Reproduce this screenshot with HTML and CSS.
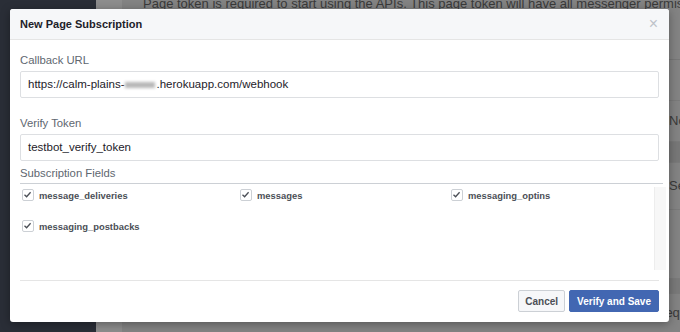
FILE: index.html
```html
<!DOCTYPE html>
<html lang="en">
<head>
  <meta charset="UTF-8">
  <title>New Page Subscription</title>
  <link rel="stylesheet" href="styles.css">
</head>
<body>

<div class="page">
  <div class="nav"></div>
  <div class="rail"></div>
  <div class="content">
    <p class="intro">Page token is required to start using the APIs. This page token will have all messenger permissions even if your app is not approved yet and can be used to test the APIs.</p>
    <div class="row r1"></div>
    <div class="row r2">Not</div>
    <div class="row r3"></div>
    <div class="row r4">Select</div>
    <div class="row r5"></div>
    <div class="row r6"></div>
    <div class="row r7">Request</div>
  </div>
</div>

<div class="modal">
  <div class="modal-head">
    <h2>New Page Subscription</h2>
    <span class="close">&times;</span>
  </div>

  <div class="modal-body">
    <label class="field-label">Callback URL</label>
    <div class="input">https://calm-plains-<span class="blur"></span>.herokuapp.com/webhook</div>

    <label class="field-label second">Verify Token</label>
    <div class="input">testbot_verify_token</div>

    <label class="field-label third">Subscription Fields</label>
    <div class="fields">
      <div class="field-grid">
        <div class="check"><span class="box"><svg viewBox="0 0 11 11" width="11" height="11"><path d="M2.5 5.8 L4.6 7.8 L8.6 3.2" fill="none" stroke="#4b4f56" stroke-width="1.3"/></svg></span>message_deliveries</div>
        <div class="check"><span class="box"><svg viewBox="0 0 11 11" width="11" height="11"><path d="M2.5 5.8 L4.6 7.8 L8.6 3.2" fill="none" stroke="#4b4f56" stroke-width="1.3"/></svg></span>messages</div>
        <div class="check"><span class="box"><svg viewBox="0 0 11 11" width="11" height="11"><path d="M2.5 5.8 L4.6 7.8 L8.6 3.2" fill="none" stroke="#4b4f56" stroke-width="1.3"/></svg></span>messaging_optins</div>
        <div class="check"><span class="box"><svg viewBox="0 0 11 11" width="11" height="11"><path d="M2.5 5.8 L4.6 7.8 L8.6 3.2" fill="none" stroke="#4b4f56" stroke-width="1.3"/></svg></span>messaging_postbacks</div>
      </div>
      <div class="track"></div>
    </div>
  </div>

  <div class="modal-foot">
    <button class="btn">Cancel</button>
    <button class="btn primary">Verify and Save</button>
  </div>
</div>

</body>
</html>
```

FILE: styles.css
```css
html, body {
  margin: 0;
  height: 100%;
  font-family: 'Liberation Sans', Arial, sans-serif;
  overflow: hidden;
}
.page {
  display: flex;
  height: 332px;
}
.nav {
  flex: 0 0 96px;
  background: #2a2e37;
}
.rail {
  flex: 0 0 26px;
  background: #8d8d8d;
}
.content {
  flex: 1;
  min-width: 0;
  background: #838383;
  color: #3a3a3a;
  font-size: 13px;
  overflow: hidden;
}
.intro {
  margin: -5px 0 0;
  padding: 0 0 0 21px;
  width: 600px;
  line-height: 17px;
  height: 64px;
  border-bottom: 1px solid #777;
}
.row {
  padding-left: 547px;
  height: 30px;
  line-height: 30px;
  white-space: nowrap;
  border-bottom: 1px solid #7a7a7a;
}
.r1 { height: 40px; }
.r2 { height: 40px; line-height: 40px; }
.r3 { height: 20px; background: #777; }
.r4 { height: 46px; line-height: 46px; }
.r5 { height: 68px; }
.r6 { height: 14px; background: #797979; }
.r7 { height: 38px; line-height: 38px; padding-left: 534px; }

.modal {
  position: absolute;
  left: 10px;
  top: 9px;
  width: 659px;
  height: 313px;
  background: #fff;
  border-radius: 3px;
  box-shadow: 0 2px 10px rgba(0, 0, 0, 0.35);
  overflow: hidden;
}
.modal-head {
  height: 30px;
  background: #f6f7f9;
  border-bottom: 1px solid #e5e5e5;
  display: flex;
  align-items: center;
  justify-content: space-between;
  padding: 0 10px;
}
.modal-head h2 {
  margin: 0;
  font-size: 11px;
  font-weight: bold;
  color: #1d2129;
}
.close {
  color: #bec2c9;
  font-size: 16px;
  line-height: 16px;
  margin-right: 1px;
}
.modal-body {
  padding: 10px 0 0 10px;
}
.field-label {
  display: block;
  font-size: 11.3px;
  line-height: 16px;
  color: #606770;
  margin-top: 2px;
  margin-bottom: 3px;
}
.field-label.second {
  margin-top: 17px;
  margin-bottom: 3px;
}
.field-label.third {
  margin-top: 4px;
  margin-bottom: 2px;
}
.input {
  width: 623px;
  height: 25px;
  line-height: 25px;
  border: 1px solid #dddfe2;
  border-radius: 2px;
  padding: 0 7px;
  font-size: 11.5px;
  color: #1d2129;
}
.blur {
  display: inline-block;
  width: 30px;
  height: 6px;
  background: #b8b8b8;
  vertical-align: middle;
  filter: blur(1.5px);
  margin-right: 2px;
}
.fields {
  position: relative;
  width: 643px;
  height: 86px;
  border-top: 1px solid #ccd0d5;
}
.field-grid {
  display: grid;
  grid-template-columns: 218px 211px 1fr;
  grid-auto-rows: 31px;
  padding: 5px 0 0 2px;
}
.check {
  display: flex;
  align-items: center;
  height: 12px;
  font-size: 9.4px;
  font-weight: bold;
  color: #4b4f56;
}
.box {
  display: inline-flex;
  width: 10px;
  height: 10px;
  border: 1px solid #ccd0d5;
  border-radius: 2px;
  margin-right: 5px;
  background: #fff;
  overflow: hidden;
}
.box svg {
  margin: -1px 0 0 -1px;
}
.track {
  position: absolute;
  right: -3px;
  top: 3px;
  bottom: 0;
  width: 11px;
  background: #f7f7f7;
  border-left: 1px solid #ededed;
}
.modal-foot {
  margin: 10px 10px 0;
  border-top: 1px solid #e5e5e5;
  padding-top: 9px;
  display: flex;
  justify-content: flex-end;
  gap: 4px;
}
.btn {
  font-family: 'Liberation Sans', Arial, sans-serif;
  font-size: 10px;
  font-weight: bold;
  height: 22px;
  padding: 0 6px;
  border: 1px solid #ccd0d5;
  border-radius: 2px;
  background: #f6f7f9;
  color: #4b4f56;
}
.btn.primary {
  padding: 0 7px;
  background: #4267b2;
  border-color: #4267b2;
  color: #fff;
}
```
